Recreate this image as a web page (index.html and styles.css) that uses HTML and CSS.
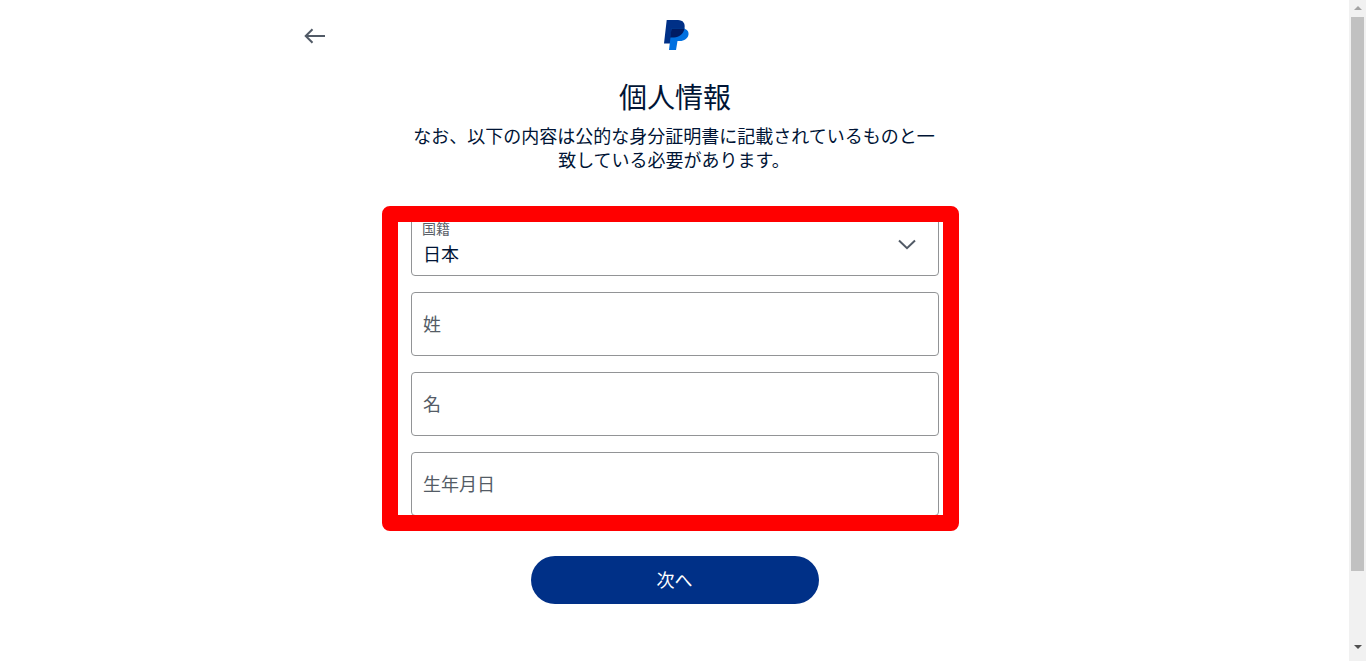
FILE: index.html
```html
<!DOCTYPE html>
<html lang="ja">
<head>
<meta charset="utf-8">
<title>個人情報</title>
<link rel="stylesheet" href="styles.css">
</head>
<body>
<div class="page">
  <main class="main">
    <header class="topbar">
      <svg class="back" width="22" height="16" viewBox="0 0 22 16" aria-hidden="true"><path d="M8.500 1.200 1.700 8l6.800 6.800M2 8h19" fill="none" stroke="#515a66" stroke-width="2"/></svg>
      <svg class="logo" width="25" height="30" viewBox="0 0 25 30" aria-hidden="true">
        <path d="M2.700 0H14C19 0 21.500 3.500 20.500 8.500C19.500 14 15 17.500 10 17.500H8.300L7 23.500H0Z" fill="#003087"/>
        <path d="M7.500 8.500H20C23 9.500 25 11.500 24.500 14.500C24 18.500 20 21 16 21H13.500L12 30H5Z" fill="#0070e0"/>
        <path d="M7.500 8.500H20.500C19.500 14 15 17.500 10 17.500H6.200Z" fill="#001c64"/>
      </svg>
    </header>
    <h1 class="title">個人情報</h1>
    <p class="lead">なお、以下の内容は公的な身分証明書に記載されているものと一<br>致している必要があります。</p>
    <form class="form">
      <div class="field select">
        <span class="small-label">国籍</span>
        <span class="value">日本</span>
        <svg class="chev" width="18" height="11" viewBox="0 0 18 11" aria-hidden="true"><path d="M1 1.500 9 9.200 17 1.500" fill="none" stroke="#515a66" stroke-width="2"/></svg>
      </div>
      <div class="field"><span class="placeholder">姓</span></div>
      <div class="field"><span class="placeholder">名</span></div>
      <div class="field"><span class="placeholder">生年月日</span></div>
      <div class="highlight"></div>
    </form>
    <button class="next" type="button">次へ</button>
  </main>
  <aside class="scrollbar">
    <span class="arrow up"></span>
    <span class="thumb"></span>
    <span class="arrow down"></span>
  </aside>
</div>
</body>
</html>
```
FILE: styles.css
```css
html, body {
  margin: 0;
  height: 100%;
  overflow: hidden;
  background: #fff;
}
body {
  font-family: "Noto Sans CJK JP", "Noto Sans", sans-serif;
  color: #001435;
}
.page {
  display: flex;
  height: 661px;
}
.main {
  flex: 1;
  display: flex;
  flex-direction: column;
  align-items: center;
  min-width: 0;
  padding-left: 1px;
}
.topbar {
  width: 742px;
  height: 50px;
  margin-top: 20px;
  position: relative;
  display: flex;
  justify-content: center;
}
.back {
  position: absolute;
  left: 0;
  top: 8px;
}
.logo {
  display: block;
  margin-left: 3px;
}
.title {
  margin: 7px 0 0;
  font-size: 28px;
  line-height: 38px;
  font-weight: 400;
  color: #001435;
}
.lead {
  margin: 8px 0 0 -2px;
  width: 528px;
  font-size: 18px;
  line-height: 24px;
  text-align: center;
  color: #001435;
}
.form {
  position: relative;
  margin-top: 41px;
  width: 528px;
  display: flex;
  flex-direction: column;
  gap: 16px;
}
.field {
  box-sizing: border-box;
  height: 64px;
  border: 1px solid #929496;
  border-radius: 4px;
  display: flex;
  flex-direction: column;
  justify-content: center;
  padding: 0 11px 2px 11px;
  background: #fff;
}
.select {
  position: relative;
  justify-content: flex-end;
  padding-bottom: 9px;
}
.small-label {
  font-size: 14px;
  line-height: 18px;
  margin-bottom: 3px;
  margin-left: -1px;
  color: #5a6068;
}
.value {
  font-size: 18px;
  line-height: 26px;
  color: #001435;
}
.placeholder {
  font-size: 18px;
  line-height: 26px;
  color: #545c66;
}
.chev {
  position: absolute;
  right: 22px;
  top: 26px;
}
.highlight {
  position: absolute;
  left: -29px;
  top: -6px;
  width: 577px;
  height: 325px;
  box-sizing: border-box;
  border: 16px solid #ff0000;
  border-radius: 8px;
}
.next {
  margin-top: 40px;
  width: 288px;
  height: 48px;
  border: 0;
  border-radius: 24px;
  background: #003087;
  color: #fff;
  font: inherit;
  font-size: 18px;
  padding: 0 1px 2px 0;
}
.scrollbar {
  width: 17px;
  flex: none;
  background: #f1f1f1;
  display: flex;
  flex-direction: column;
  align-items: center;
  border-left: 0;
}
.arrow {
  flex: none;
  width: 0;
  height: 0;
  border-left: 4px solid transparent;
  border-right: 4px solid transparent;
}
.up {
  margin: 6px 0 7px;
  border-bottom: 4px solid #a3a3a3;
}
.thumb {
  flex: none;
  width: 13px;
  height: 554px;
  background: #c1c1c1;
}
.down {
  margin-top: 74px;
  border-top: 4px solid #505050;
}
```
